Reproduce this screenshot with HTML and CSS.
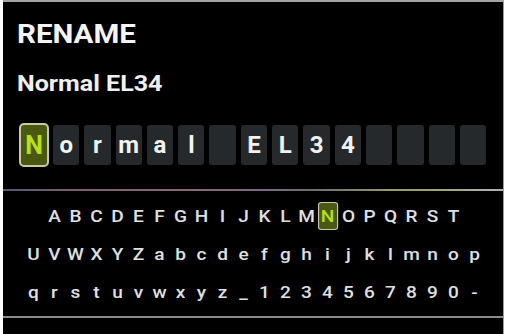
FILE: index.html
```html
<!DOCTYPE html>
<html>
<head>
<meta charset="utf-8">
<link rel="stylesheet" href="styles.css">
</head>
<body>
<div class="panel">
  <div class="title"><span class="stretch">RENAME</span></div>
  <div class="subtitle"><span class="stretch">Normal EL34</span></div>
  <div class="slots">
    <div class="slot active">N</div>
    <div class="slot">o</div>
    <div class="slot">r</div>
    <div class="slot">m</div>
    <div class="slot">a</div>
    <div class="slot">l</div>
    <div class="slot"></div>
    <div class="slot">E</div>
    <div class="slot">L</div>
    <div class="slot">3</div>
    <div class="slot">4</div>
    <div class="slot"></div>
    <div class="slot"></div>
    <div class="slot"></div>
    <div class="slot"></div>
  </div>
  <div class="divider"></div>
  <div class="keyboard">
    <div class="krow">
      <span class="key">A</span><span class="key">B</span><span class="key">C</span><span class="key">D</span><span class="key">E</span><span class="key">F</span><span class="key">G</span><span class="key">H</span><span class="key">I</span><span class="key">J</span><span class="key">K</span><span class="key">L</span><span class="key">M</span><span class="key"><span class="sel">N</span></span><span class="key">O</span><span class="key">P</span><span class="key">Q</span><span class="key">R</span><span class="key">S</span><span class="key">T</span>
    </div>
    <div class="krow">
      <span class="key">U</span><span class="key">V</span><span class="key">W</span><span class="key">X</span><span class="key">Y</span><span class="key">Z</span><span class="key">a</span><span class="key">b</span><span class="key">c</span><span class="key">d</span><span class="key">e</span><span class="key">f</span><span class="key">g</span><span class="key">h</span><span class="key">i</span><span class="key">j</span><span class="key">k</span><span class="key">l</span><span class="key">m</span><span class="key">n</span><span class="key">o</span><span class="key">p</span>
    </div>
    <div class="krow">
      <span class="key">q</span><span class="key">r</span><span class="key">s</span><span class="key">t</span><span class="key">u</span><span class="key">v</span><span class="key">w</span><span class="key">x</span><span class="key">y</span><span class="key">z</span><span class="key">_</span><span class="key">1</span><span class="key">2</span><span class="key">3</span><span class="key">4</span><span class="key">5</span><span class="key">6</span><span class="key">7</span><span class="key">8</span><span class="key">9</span><span class="key">0</span><span class="key">-</span>
    </div>
  </div>
  <div class="bottomline"></div>
</div>
</body>
</html>
```
FILE: styles.css
```css
html, body {
  margin: 0;
  padding: 0;
  background: #ffffff;
}
body {
  width: 506px;
  height: 334px;
  overflow: hidden;
  font-family: Roboto, "Liberation Sans", sans-serif;
}
.panel {
  margin-left: 3px;
  width: 501px;
  height: 334px;
  box-sizing: border-box;
  background: #000;
  border-top: 2px solid #a4a4a4;
  border-right: 1px solid #9a9a9a;
  padding-top: 18px;
  display: flex;
  flex-direction: column;
}
.stretch {
  display: inline-block;
  transform-origin: left center;
}
.title {
  color: #f4f4f4;
  font-weight: 700;
  font-size: 25px;
  line-height: 30px;
  padding-left: 14px;
}
.title .stretch {
  transform: scaleX(1.18);
}
.subtitle {
  color: #f0f0f0;
  font-weight: 700;
  font-size: 22px;
  line-height: 28px;
  padding-left: 14px;
  margin-top: 20px;
}
.subtitle .stretch {
  transform: scaleX(1.14);
}
.slots {
  display: flex;
  align-items: center;
  gap: 5px;
  margin-top: 25px;
  margin-left: 16px;
  height: 44px;
}
.slot {
  width: 26.3px;
  height: 40px;
  border-radius: 3px;
  background: #25292b;
  color: #f2f2f2;
  font-weight: 700;
  font-size: 24px;
  display: flex;
  align-items: center;
  justify-content: center;
}
.slot.active {
  width: 30px;
  height: 44px;
  box-sizing: border-box;
  margin-right: -1px;
  background: #4a5912;
  border: 2px solid #cbc8a2;
  border-radius: 5px;
  color: #b6e01c;
  font-size: 25px;
}
.divider {
  margin-top: 22px;
  height: 2px;
  background: linear-gradient(to right, #55586c 0%, #74606e 12%, #886878 35%, #7a6a7e 52%, #6e6e6e 62%, #9a9a6a 78%, #a2a270 86%, #b4b4b4 100%);
}
.keyboard {
  margin-top: 6px;
  display: flex;
  flex-direction: column;
  align-items: center;
  padding-left: 1px;
}
.krow {
  display: flex;
  height: 38px;
  align-items: center;
}
.key {
  width: 21px;
  text-align: center;
  color: #e0e0e0;
  font-size: 17px;
  font-weight: 500;
  line-height: 38px;
  display: flex;
  justify-content: center;
  align-items: center;
  transform: scaleX(1.12);
}
.sel {
  display: inline-flex;
  align-items: center;
  justify-content: center;
  width: 18px;
  height: 28px;
  box-sizing: border-box;
  background: #4a5912;
  border: 1.5px solid #cbc8a2;
  border-radius: 3px;
  color: #b6e01c;
  line-height: 1;
}
.bottomline {
  margin-top: 5px;
  height: 2px;
  background: #8a8a8a;
}
```
